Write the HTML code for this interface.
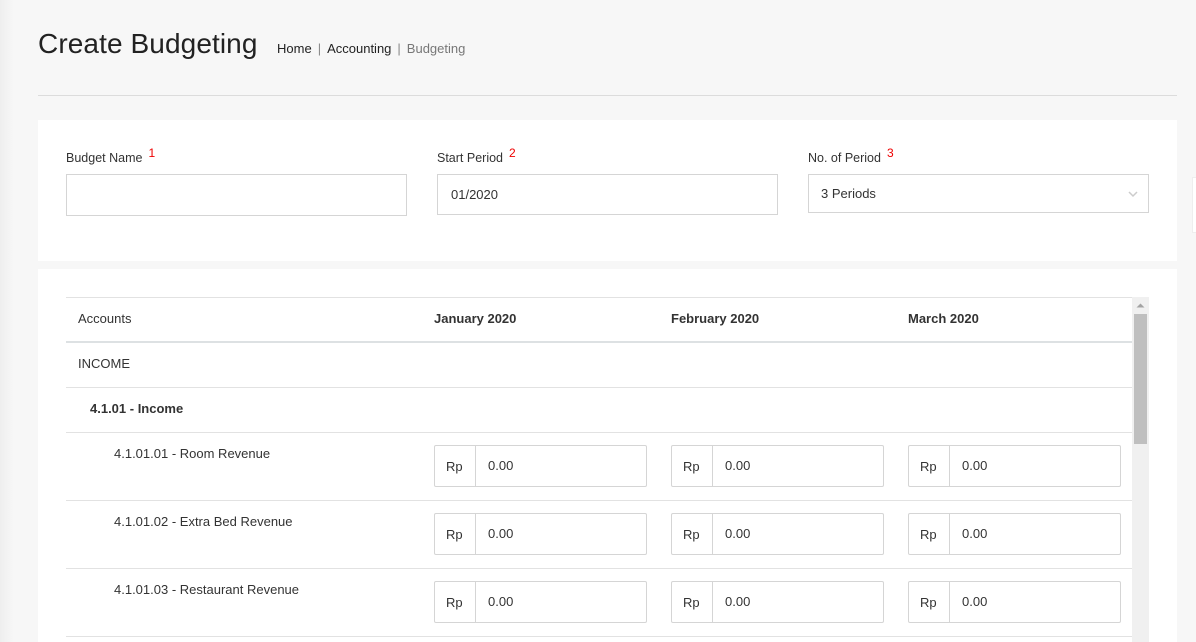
<!DOCTYPE html>
<html><head><meta charset="utf-8"><style>
*{box-sizing:border-box;margin:0;padding:0}
body{width:1196px;height:642px;overflow:hidden;background:#f7f7f7;font-family:"Liberation Sans",sans-serif;color:#333;position:relative}
.a{position:absolute}
.shadow{left:0;top:0;width:14px;height:642px;background:linear-gradient(to right,#eeeeee,#f7f7f7)}
h1{position:absolute;left:38px;top:28px;font-size:28px;font-weight:normal;color:#222;letter-spacing:0.1px}
.bc{left:277px;top:41px;font-size:13px;color:#222}
.bc .s{color:#888;margin:0 6px}
.bc .g{color:#777}
.hr{left:38px;top:95px;width:1139px;height:1px;background:#dcdcdc}
.card{background:#fff;left:38px;width:1139px}
.lbl{font-size:12.5px;color:#333}
.lbl sup{color:#e00;font-size:12px;margin-left:6px;vertical-align:5px}
.inp{border:1px solid #d5d5d5;height:42px;width:341px;font-size:13px;padding:12px 13px}
.line{left:66px;width:1066px;height:1px;background:#e2e2e2}
.th{font-size:13px;font-weight:bold;color:#333}
.td{font-size:13px;color:#333}
.ig{width:213px;height:42px;border:1px solid #d5d5d5;border-radius:2px;font-size:13px}
.ig .rp{position:absolute;left:0;top:0;width:41px;height:40px;border-right:1px solid #d5d5d5;padding:13px 0 0 11px}
.ig .v{position:absolute;left:53px;top:12px}
</style></head><body>
<div class="a shadow"></div>
<h1>Create Budgeting</h1>
<div class="a bc">Home<span class="s">|</span>Accounting<span class="s">|</span><span class="g">Budgeting</span></div>
<div class="a hr"></div>

<div class="a card" style="top:120px;height:141px"></div>
<div class="a lbl" style="left:66px;top:146px">Budget Name<sup>1</sup></div>
<div class="a inp" style="left:66px;top:174px"></div>
<div class="a lbl" style="left:437px;top:146px">Start Period<sup>2</sup></div>
<div class="a inp" style="left:437px;top:174px;height:41px">01/2020</div>
<div class="a lbl" style="left:808px;top:146px">No. of Period<sup>3</sup></div>
<div class="a inp" style="left:808px;top:174px;height:39px;padding-top:11px;padding-left:12px">3 Periods
<svg class="a" style="right:10px;top:16px" width="10" height="7" viewBox="0 0 10 7"><path d="M1 1l4 4 4-4" stroke="#ccc" stroke-width="1.5" fill="none"/></svg></div>
<div class="a" style="left:1192px;top:177px;width:4px;height:56px;background:#fff;border:1px solid #eee;border-right:none"></div>

<div class="a card" style="top:269px;height:373px"></div>
<div class="a line" style="top:297px"></div>
<div class="a th" style="left:78px;top:311px;font-weight:normal">Accounts</div>
<div class="a th" style="left:434px;top:311px">January 2020</div>
<div class="a th" style="left:671px;top:311px">February 2020</div>
<div class="a th" style="left:908px;top:311px">March 2020</div>
<div class="a line" style="top:341px;height:2px;background:#dde1e3"></div>
<div class="a td" style="left:78px;top:356px">INCOME</div>
<div class="a line" style="top:387px"></div>
<div class="a td" style="left:90px;top:401px;font-weight:bold">4.1.01 - Income</div>
<div class="a line" style="top:432px"></div>

<div class="a td" style="left:114px;top:446px">4.1.01.01 - Room Revenue</div>
<div class="a line" style="top:500px"></div>
<div class="a td" style="left:114px;top:514px">4.1.01.02 - Extra Bed Revenue</div>
<div class="a line" style="top:568px"></div>
<div class="a td" style="left:114px;top:582px">4.1.01.03 - Restaurant Revenue</div>
<div class="a line" style="top:636px"></div>

<div class="a ig" style="left:434px;top:445px"><span class="rp">Rp</span><span class="v">0.00</span></div>
<div class="a ig" style="left:671px;top:445px"><span class="rp">Rp</span><span class="v">0.00</span></div>
<div class="a ig" style="left:908px;top:445px"><span class="rp">Rp</span><span class="v">0.00</span></div>
<div class="a ig" style="left:434px;top:513px"><span class="rp">Rp</span><span class="v">0.00</span></div>
<div class="a ig" style="left:671px;top:513px"><span class="rp">Rp</span><span class="v">0.00</span></div>
<div class="a ig" style="left:908px;top:513px"><span class="rp">Rp</span><span class="v">0.00</span></div>
<div class="a ig" style="left:434px;top:581px"><span class="rp">Rp</span><span class="v">0.00</span></div>
<div class="a ig" style="left:671px;top:581px"><span class="rp">Rp</span><span class="v">0.00</span></div>
<div class="a ig" style="left:908px;top:581px"><span class="rp">Rp</span><span class="v">0.00</span></div>

<div class="a" style="left:1132px;top:297px;width:17px;height:345px;background:#f0f0f0"></div>
<svg class="a" style="left:1136px;top:302px" width="9" height="6" viewBox="0 0 9 6"><path d="M0.5 5.5L4.5 1.5 8.5 5.5Z" fill="#a3a3a3"/></svg>
<div class="a" style="left:1134px;top:314px;width:13px;height:130px;background:#bfbfbf"></div>
</body></html>
